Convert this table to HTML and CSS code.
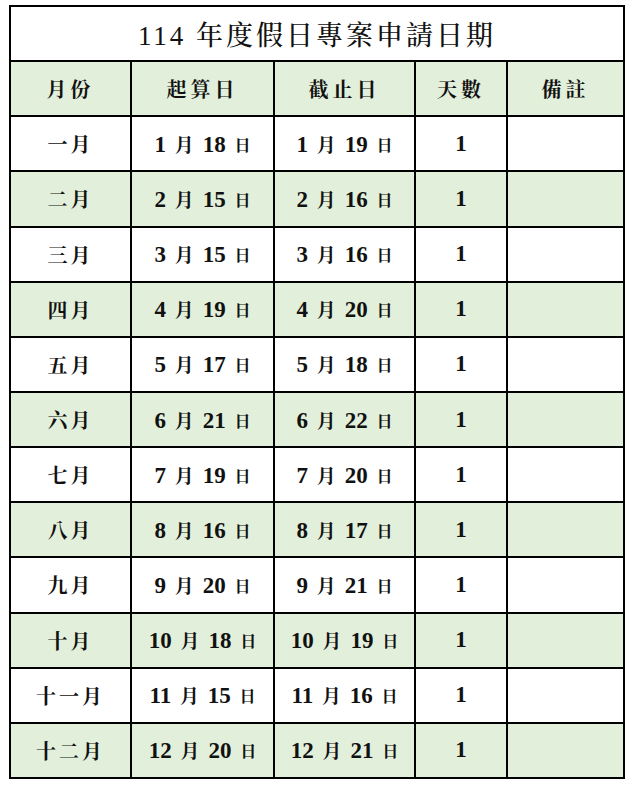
FILE: index.html
```html
<!DOCTYPE html>
<html lang="zh-Hant">
<head>
<meta charset="utf-8">
<title>114 年度假日專案申請日期</title>
<link rel="stylesheet" href="styles.css">
</head>
<body>
<table class="sched">
  <colgroup>
    <col class="c-month"><col class="c-start"><col class="c-end"><col class="c-days"><col class="c-note">
  </colgroup>
  <tr class="title-row"><td colspan="5" class="title">114 年度假日專案申請日期</td></tr>
  <tr class="head green"><td>月份</td><td>起算日</td><td>截止日</td><td>天數</td><td>備註</td></tr>
  <tr><td class="m">一月</td><td><span class="n">1</span> 月 <span class="n">18</span> <span class="ri">日</span></td><td><span class="n">1</span> 月 <span class="n">19</span> <span class="ri">日</span></td><td><span class="n">1</span></td><td></td></tr>
  <tr class="green"><td class="m">二月</td><td><span class="n">2</span> 月 <span class="n">15</span> <span class="ri">日</span></td><td><span class="n">2</span> 月 <span class="n">16</span> <span class="ri">日</span></td><td><span class="n">1</span></td><td></td></tr>
  <tr><td class="m">三月</td><td><span class="n">3</span> 月 <span class="n">15</span> <span class="ri">日</span></td><td><span class="n">3</span> 月 <span class="n">16</span> <span class="ri">日</span></td><td><span class="n">1</span></td><td></td></tr>
  <tr class="green"><td class="m">四月</td><td><span class="n">4</span> 月 <span class="n">19</span> <span class="ri">日</span></td><td><span class="n">4</span> 月 <span class="n">20</span> <span class="ri">日</span></td><td><span class="n">1</span></td><td></td></tr>
  <tr><td class="m">五月</td><td><span class="n">5</span> 月 <span class="n">17</span> <span class="ri">日</span></td><td><span class="n">5</span> 月 <span class="n">18</span> <span class="ri">日</span></td><td><span class="n">1</span></td><td></td></tr>
  <tr class="green"><td class="m">六月</td><td><span class="n">6</span> 月 <span class="n">21</span> <span class="ri">日</span></td><td><span class="n">6</span> 月 <span class="n">22</span> <span class="ri">日</span></td><td><span class="n">1</span></td><td></td></tr>
  <tr><td class="m">七月</td><td><span class="n">7</span> 月 <span class="n">19</span> <span class="ri">日</span></td><td><span class="n">7</span> 月 <span class="n">20</span> <span class="ri">日</span></td><td><span class="n">1</span></td><td></td></tr>
  <tr class="green"><td class="m">八月</td><td><span class="n">8</span> 月 <span class="n">16</span> <span class="ri">日</span></td><td><span class="n">8</span> 月 <span class="n">17</span> <span class="ri">日</span></td><td><span class="n">1</span></td><td></td></tr>
  <tr><td class="m">九月</td><td><span class="n">9</span> 月 <span class="n">20</span> <span class="ri">日</span></td><td><span class="n">9</span> 月 <span class="n">21</span> <span class="ri">日</span></td><td><span class="n">1</span></td><td></td></tr>
  <tr class="green"><td class="m">十月</td><td><span class="n">10</span> 月 <span class="n">18</span> <span class="ri">日</span></td><td><span class="n">10</span> 月 <span class="n">19</span> <span class="ri">日</span></td><td><span class="n">1</span></td><td></td></tr>
  <tr><td class="m">十一月</td><td><span class="n">11</span> 月 <span class="n">15</span> <span class="ri">日</span></td><td><span class="n">11</span> 月 <span class="n">16</span> <span class="ri">日</span></td><td><span class="n">1</span></td><td></td></tr>
  <tr class="green"><td class="m">十二月</td><td><span class="n">12</span> 月 <span class="n">20</span> <span class="ri">日</span></td><td><span class="n">12</span> 月 <span class="n">21</span> <span class="ri">日</span></td><td><span class="n">1</span></td><td></td></tr>
</table>
</body>
</html>
```
FILE: styles.css
```css
html, body {
  margin: 0;
  padding: 0;
  background: #ffffff;
}
body {
  padding: 5px 0 0 9px;
  font-family: "Liberation Serif", "Noto Serif CJK TC", "Noto Sans CJK TC", serif;
  color: #111111;
}
.sched {
  border-collapse: collapse;
  width: 614px;
  table-layout: fixed;
}
.c-month { width: 121px; }
.c-start { width: 143px; }
.c-end { width: 141px; }
.c-days { width: 92px; }
.c-note { width: 117px; }
.sched td {
  border: 2px solid #000000;
  height: 53.15px;
  padding: 0;
  text-align: center;
  vertical-align: middle;
  font-size: 19px;
  font-weight: bold;
  white-space: nowrap;
  word-spacing: 4px;
}
.n {
  font-size: 23px;
}
.sched .title {
  font-size: 27px;
  font-weight: 500;
  letter-spacing: 3px;
  word-spacing: 0;
}
.green td {
  background: #e2efda;
}
.sched .head td {
  font-size: 20px;
  letter-spacing: 4px;
  word-spacing: 0;
}
.sched .m {
  font-size: 20px;
  letter-spacing: 3px;
}
.ri {
  font-size: 16px;
  vertical-align: 1px;
}
```
